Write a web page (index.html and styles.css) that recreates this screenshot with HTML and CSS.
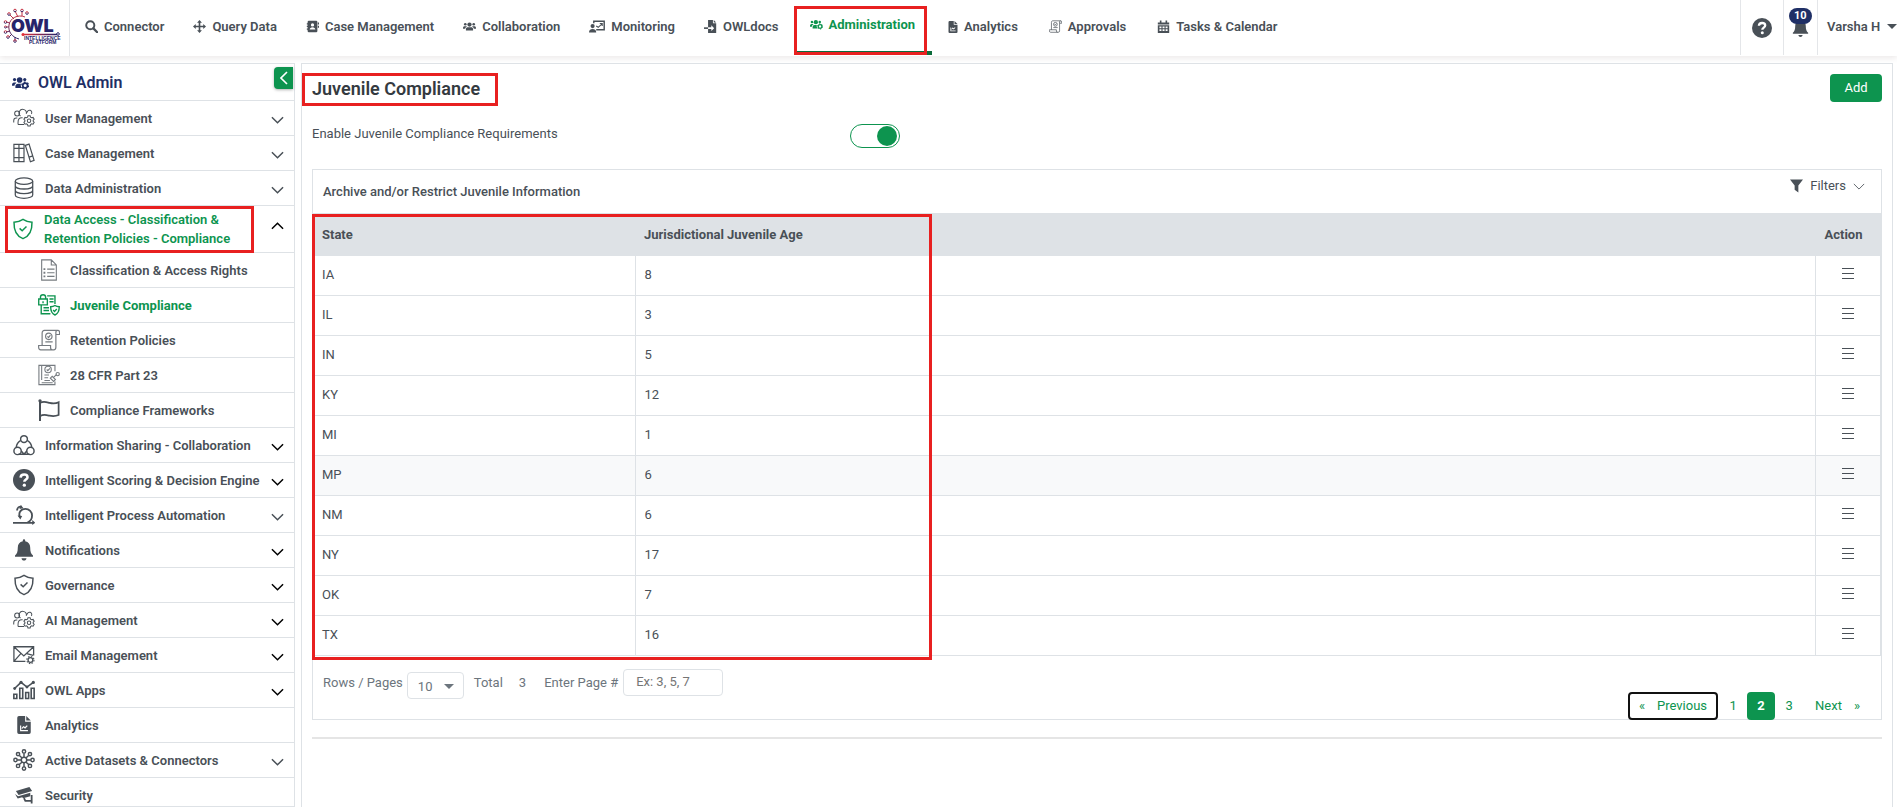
FILE: index.html
```
<!DOCTYPE html>
<html lang="en">

<head>
    <meta charset="UTF-8">
    <meta name="viewport" content="width=device-width, initial-scale=1.0">
    <title>Juvenile Compliance</title>
    <link rel="stylesheet" href="styles.css">
</head>

<body>
    <svg class="sprite" aria-hidden="true">
        <symbol id="i-search" viewBox="0 0 16 16"><circle cx="6.5" cy="6.5" r="5" fill="none" stroke="currentColor" stroke-width="2.4"/><path d="M10.3 10.3L15 15" stroke="currentColor" stroke-width="2.8" stroke-linecap="round"/></symbol>
        <symbol id="i-move" viewBox="0 0 16 16"><path d="M8 0l3 3.4H9V7h3.600V5L16 8l-3.400 3V9H9v3.600h2L8 16l-3-3.400h2V9H3.400v2L0 8l3.400-3v2H7V3.400H5z" fill="currentColor"/></symbol>
        <symbol id="i-book" viewBox="0 0 16 16"><path fill-rule="evenodd" d="M3.500 1h9A1.500 1.500 0 0 1 14 2.500v11a1.500 1.500 0 0 1-1.500 1.500h-9A1.500 1.500 0 0 1 2 13.500V12H1v-1.500h1v-2H1V7h1V5.500H1V4h1V2.500A1.500 1.500 0 0 1 3.500 1zM8 4a2 2 0 1 0 0 4 2 2 0 0 0 0-4zM4.500 11.800h7C11.500 10 10 8.800 8 8.800s-3.500 1.200-3.500 3z" fill="currentColor"/><path d="M14.500 3H16v2.500h-1.500zM14.500 7H16v2.500h-1.500z" fill="currentColor"/></symbol>
        <symbol id="i-users" viewBox="0 0 20 16"><g fill="currentColor"><circle cx="10" cy="5" r="3.300"/><circle cx="3.500" cy="4.500" r="2"/><circle cx="16.500" cy="4.500" r="2"/><path d="M4.500 14v-2c0-2 1.500-3 3-3h5c1.500 0 3 1 3 3v2zM0 10.500C0 8.500 1 7.500 2.500 7.500h2.800l.7.8c-1.500.6-2.400 1.600-2.600 3.200H0zM20 10.500c0-2-1-3-2.500-3h-2.800l-.7.8c1.500.6 2.400 1.600 2.600 3.200H20z"/></g></symbol>
        <symbol id="i-usergear" viewBox="0 0 20 16"><g fill="currentColor"><circle cx="9" cy="4.500" r="3.300"/><circle cx="3" cy="4" r="1.900"/><circle cx="15" cy="4" r="1.900"/><path d="M4 14v-2c0-2 1.300-3.200 3-3.200h3.500c-.6 2 .1 4 1.500 5.200zM0 10.500C0 8.500 1 7.300 2.300 7.300h2.400l.6.8c-1.400.6-2.200 1.600-2.400 3.200H0z"/></g><circle cx="15.500" cy="11" r="2.800" fill="none" stroke="currentColor" stroke-width="2"/><circle cx="15.500" cy="11" r="4" fill="none" stroke="currentColor" stroke-width="1.500" stroke-dasharray="2 2.190"/></symbol>
        <symbol id="i-board" viewBox="0 0 20 16"><path d="M6 4V1.500h13v10.500H9" fill="none" stroke="currentColor" stroke-width="1.800"/><path d="M9 7.500l2.500 1.500 4.500-4M13.500 4.300h3v3" fill="none" stroke="currentColor" stroke-width="1.400"/><circle cx="4.500" cy="7.500" r="2.600" fill="currentColor"/><path d="M0 15.500c0-3 1.500-4.500 4.500-4.500S9 12.500 9 15.500z" fill="currentColor"/></symbol>
        <symbol id="i-import" viewBox="0 0 16 16"><path fill-rule="evenodd" d="M5 0h6v4h4v12H5v-5h4v2.500L12.500 10 9 6.500V9H5zM12 0l3 3h-3z" fill="currentColor"/><path d="M0 9h5v2H0z" fill="currentColor"/></symbol>
        <symbol id="i-filechart" viewBox="0 0 12 16"><path fill-rule="evenodd" d="M1.500 0H7v5h5v9.500a1.500 1.500 0 0 1-1.500 1.500h-9A1.500 1.500 0 0 1 0 14.500v-13A1.500 1.500 0 0 1 1.500 0zM2.500 8.500v5h7v-1h-6v-4zM4 11.800l1.600-1.500 1.400 1 2.300-2.400-.8-.7-1.600 1.600-1.400-1L4 10.400z" fill="currentColor"/><path d="M8 0l4 4H8z" fill="currentColor"/></symbol>
        <symbol id="i-scroll" viewBox="0 0 24 24"><g fill="none" stroke="currentColor" stroke-width="1.300"><path d="M4.500 18V4.500C4.500 2.500 5.500 1.500 7 1.500h14.500c1.300 0 2 .8 2 2V6h-4M19.500 6V3.500c0-1.200.8-2 2-2M19.500 6v14c0 1.700-.8 2.700-2.300 2.700H3C1.500 22.700.7 21.500.7 20v-2h13v2.200c0 1.500.8 2.500 2 2.500"/><circle cx="11.800" cy="8" r="3.500"/><path d="M10.300 8l1.200 1.300 2-2.500M8 14h8"/></g></symbol>
        <symbol id="i-calendar" viewBox="0 0 16 16"><path fill-rule="evenodd" d="M1 3h2.500V.500h2V3h5V.500h2V3H15v2.500H1zM1 6.500h14V16H1zM3 8v2h2.500V8zM6.800 8v2h2.500V8zM10.600 8v2H13V8zM3 11.500v2h2.500v-2zM6.800 11.500v2h2.500v-2zM10.600 11.500v2H13v-2z" fill="currentColor"/></symbol>
        <symbol id="i-question" viewBox="0 0 20 20"><circle cx="10" cy="10" r="10" fill="currentColor"/><path d="M6.900 7.800C7 5.900 8.300 5 10.100 5c1.800 0 3.100 1 3.100 2.500 0 2-2.900 2.200-2.900 4.200" fill="none" stroke="#fff" stroke-width="2.300"/><circle cx="10.300" cy="14.700" r="1.500" fill="#fff"/></symbol>
        <symbol id="i-bell" viewBox="0 0 20 22"><path d="M8.800 1.500a1.200 1.200 0 0 1 2.400 0v.8c3.300.6 5 3 5 6.200 0 4.500 1 6.500 2.800 8v1.200H1v-1.200c1.800-1.500 2.800-3.500 2.800-8 0-3.200 1.700-5.600 5-6.200zM7.500 19.200h5c-.2 1.500-1.200 2.300-2.500 2.300s-2.300-.8-2.500-2.300z" fill="currentColor"/></symbol>
        <symbol id="i-chevron" viewBox="0 0 14 8"><path d="M1 1l6 6 6-6" fill="none" stroke="currentColor" stroke-width="1.600"/></symbol>
        <symbol id="i-chevron-thin" viewBox="0 0 14 8"><path d="M1 1l6 6 6-6" fill="none" stroke="currentColor" stroke-width="1"/></symbol>
        <symbol id="i-team" viewBox="0 0 24 20"><g fill="none" stroke="currentColor" stroke-width="1.100"><circle cx="4.500" cy="5" r="2.700"/><path d="M.8 15v-2c0-2 1-3 2.700-3h1.200M14.500 5.500A4 4 0 1 0 8.200 7.800M5.500 17v-2.500c0-3 1.500-4.700 4-4.700h1M5.500 17H12M15.500 4a2.500 2.500 0 1 1 4.500 1.500"/><circle cx="17.500" cy="13" r="1.900"/><path d="M16.300 7.600h2.400l.4 1.500 1.300.7 1.500-.4 1.200 2-1.100 1.100v1.200l1.100 1.100-1.200 2-1.500-.4-1.300.7-.4 1.500h-2.400l-.4-1.500-1.300-.7-1.500.4-1.200-2 1.100-1.100v-1.200l-1.100-1.100 1.200-2 1.500.4 1.300-.7z"/></g></symbol>
        <symbol id="i-binders" viewBox="0 0 24 22"><g fill="none" stroke="currentColor" stroke-width="1.300"><path d="M1 1.500h5.500v19H1zM6.500 1.500H12v19H6.500zM1 6h11M1 16h11M13.500 2.700l4-1.400L23 19l-4 1.500zM17.600 15.500l4.100-1.400"/></g></symbol>
        <symbol id="i-database" viewBox="0 0 22 24"><g fill="none" stroke="currentColor" stroke-width="1.400"><ellipse cx="11" cy="4.500" rx="9.500" ry="3.500"/><path d="M1.500 4.500v15c0 2 4 3.700 9.500 3.700s9.500-1.700 9.500-3.700v-15M1.500 9.500c0 2 4 3.600 9.500 3.600s9.500-1.600 9.500-3.600M1.500 14.500c0 2 4 3.600 9.500 3.600s9.500-1.600 9.500-3.600"/></g></symbol>
        <symbol id="i-shield" viewBox="0 0 22 24"><g fill="none" stroke="currentColor" stroke-width="1.600"><path d="M11 1.500c3 2 6 3 9.800 3.200.3 9-2 15-9.800 17.800C3.200 19.700.9 13.700 1.200 4.700 5 4.500 8 3.500 11 1.500z"/><path d="M7.300 11.300l2.800 2.700 4.700-4.800"/></g></symbol>
        <symbol id="i-list" viewBox="0 0 18 24"><g fill="none" stroke="currentColor" stroke-width="1.200"><path d="M1 1h10.500L17 6.500V23H1zM11.500 1v5.500H17M7 11h8M7 15h8M7 19h8"/><path d="M3 11h2M3 15h2M3 19h2" stroke-width="2"/></g></symbol>
        <symbol id="i-lockdoc" viewBox="0 0 24 24"><g fill="none" stroke="currentColor" stroke-width="1.500"><path d="M.8 5.500h9.400v6.300H.8zM2.700 5.500V3.300c0-3.300 5.600-3.300 5.600 0v2.200M5.500 8v2M10 2h8.500v9M3.500 12v9.500h10M12.500 5.500H17M12.500 8.500H17M6 15h6M6 18h6M18.500 12.500c1.500 1 3 1.300 4.700 1.400 0 4.500-1 7.500-4.700 9-3.700-1.500-4.700-4.500-4.700-9 1.700-.1 3.200-.4 4.700-1.400z"/><path d="M16.500 17.500l1.500 1.500 2.500-2.700"/></g></symbol>
        <symbol id="i-signdoc" viewBox="0 0 24 24"><g fill="none" stroke="currentColor" stroke-width="1.200"><path d="M18.500 8V1.500H1v21h17.500V19M4 1.500v16M7 12h5M7 15h4M7 18h6M4 20.500h12"/><circle cx="11" cy="6" r="3.500"/><path d="M9.500 6l1.200 1.200L13 4.700M13.500 15.500l2-2 3.500 3.500-2 2zM17 14.500l3-3"/><circle cx="21.500" cy="11" r="1.800"/></g></symbol>
        <symbol id="i-flag" viewBox="0 0 24 24"><path d="M2.500 4c4-1.700 7-.5 10 .2 3.500.8 7 .8 10-.7v14c-3.500 1.500-6.500 1.500-10 .7-3.500-.8-6.500-1.700-10 .3" fill="none" stroke="currentColor" stroke-width="1.900"/><path d="M2.200 2v22" stroke="currentColor" stroke-width="2.200"/><circle cx="2.200" cy="2" r="1.800" fill="currentColor"/></symbol>
        <symbol id="i-sharing" viewBox="0 0 24 24"><g fill="none" stroke="currentColor" stroke-width="1.600"><circle cx="12" cy="5.500" r="3.700"/><circle cx="5" cy="18.500" r="4"/><circle cx="19" cy="18.500" r="4"/><path d="M8.500 7C6 8.500 3.800 11.500 3.500 14.800M15.500 7c2.500 1.500 4.700 4.500 5 7.800M9 18.500l3 3.500 3-3.500M12 22H6M12 22h6"/></g></symbol>
        <symbol id="i-process" viewBox="0 0 24 22"><g fill="none" stroke="currentColor" stroke-width="2"><path d="M0 19.500h22M7.500 13C5.500 8 9 4.300 13.500 4.300c4.200 0 7.300 3.200 7.300 7.300 0 3.500-2 6.500-5.300 7.900M4.500 6C4.500 3 6.500 1.500 9.500 2"/></g><path d="M8.500 0l3 3.500-4.500 1zM21 16.500l3.500 3-3.500 2.500zM5 11.500l5 .5-2 4z" fill="currentColor"/></symbol>
        <symbol id="i-mail" viewBox="0 0 24 20"><g fill="none" stroke="currentColor" stroke-width="1.400"><path d="M13.500 17H1V1h21.500v9.500M1 1l10.800 10L22.500 1M1 17l7.500-8.500M22 10.500L15 8.500"/><circle cx="19" cy="15.500" r="2.600"/></g><circle cx="19" cy="15.500" r="3.900" fill="none" stroke="currentColor" stroke-width="1.200" stroke-dasharray="1.600 1.460"/></symbol>
        <symbol id="i-bars" viewBox="0 0 26 22"><g fill="none" stroke="currentColor" stroke-width="1.900"><path d="M1 16h3.500v5H1zM8 9h3.500v12H8zM15 14h3.500v7H15zM21.500 9H25v12h-3.500zM1.500 9.500L9.500 2l7 5.500L24 2"/></g><g fill="currentColor"><circle cx="2" cy="9.300" r="1.700"/><circle cx="9.500" cy="2" r="1.900"/><circle cx="16.500" cy="7.500" r="1.700"/><circle cx="24" cy="2" r="1.900"/></g></symbol>
        <symbol id="i-network" viewBox="0 0 24 24"><g fill="none" stroke="currentColor" stroke-width="1.600"><circle cx="12" cy="12" r="3"/><path d="M12 9V4.500M12 15v4.500M9 12H4.500M15 12h4.500M9.900 9.900L7 7M14.100 9.900L17 7M9.900 14.100L7 17M14.100 14.100L17 17"/><circle cx="12" cy="2.700" r="1.800"/><circle cx="12" cy="21.300" r="1.800"/><circle cx="2.700" cy="12" r="1.800"/><circle cx="21.300" cy="12" r="1.800"/><circle cx="5.500" cy="5.500" r="1.800"/><circle cx="18.500" cy="5.500" r="1.800"/><circle cx="5.500" cy="18.500" r="1.800"/><circle cx="18.500" cy="18.500" r="1.800"/></g></symbol>
        <symbol id="i-camera" viewBox="0 0 22 20"><g fill="currentColor"><path d="M2 5.500L17 1l3 4.500L5 10zM1 9l3.500 2.500L18 7.500v4l-8 2-1-1-5 1.500z"/></g><path d="M11 13.500l1.500 3H19M19.500 10v9.500" fill="none" stroke="currentColor" stroke-width="2"/></symbol>
        <symbol id="i-filter" viewBox="0 0 14 14"><path d="M0 0h14L9 6.500V14l-4-3V6.500z" fill="currentColor"/></symbol>
        <symbol id="i-menu" viewBox="0 0 12 12"><path d="M0 1.500h12M0 6.500h12M0 11.500h12" stroke="currentColor" stroke-width="1"/></symbol>
    </svg>

    <header class="topbar">
        <a class="logo" href="#" aria-label="OWL Intelligence Platform">
            <svg width="66" height="40" viewBox="0 0 66 40">
                <defs>
                    <linearGradient id="rim" x1="0" y1="0" x2="0" y2="1"><stop offset="0" stop-color="#d8343f"/><stop offset="1" stop-color="#27246a"/></linearGradient>
                    <linearGradient id="line" gradientUnits="userSpaceOnUse" x1="23" y1="0" x2="57" y2="0"><stop offset="0" stop-color="#e0303a"/><stop offset="1" stop-color="#27246a"/></linearGradient>
                </defs>
                <g fill="none" stroke="url(#rim)" stroke-width="1">
                    <path d="M25 9C18 6 10 10 9 17M9 17C8 24 12 29 19 31M14 11l-4-4M18 9l-3-6M22 8V3M10 15l-4-1M9 19H6M10 23l-4 1M12 26l-3 3M15 29v4"/>
                    <circle cx="9" cy="6" r="1.300"/><circle cx="15" cy="2.500" r="1.300"/><circle cx="22" cy="2.500" r="1.300"/><circle cx="27" cy="5" r="1.300"/><circle cx="5.500" cy="14" r="1.300"/><circle cx="5.500" cy="19" r="1"/><circle cx="5.500" cy="24" r="1.300"/><circle cx="8" cy="29" r="1.300"/><circle cx="15" cy="33" r="1.300"/>
                </g>
                <text class="logo-name" x="11" y="24">OWL</text>
                <path d="M23 26.500h34" stroke="url(#line)" stroke-width="1.300"/>
                <circle cx="23" cy="26.500" r="1.500" fill="#e0303a"/><circle cx="58" cy="26" r="1.300" fill="none" stroke="#27246a"/>
                <text class="logo-tag" x="24" y="32">INTELLIGENCE</text>
                <text class="logo-tag" x="29" y="36">PLATFORM</text>
            </svg>
        </a>
        <nav class="topnav">
            <a href="#"><svg class="ico-13"><use href="#i-search"/></svg>Connector</a>
            <a href="#"><svg class="ico-13"><use href="#i-move"/></svg>Query Data</a>
            <a href="#"><svg class="ico-13"><use href="#i-book"/></svg>Case Management</a>
            <a href="#"><svg class="ico-13"><use href="#i-users"/></svg>Collaboration</a>
            <a href="#"><svg class="ico-16"><use href="#i-board"/></svg>Monitoring</a>
            <a href="#"><svg class="ico-13"><use href="#i-import"/></svg>OWLdocs</a>
            <a class="active" href="#"><svg class="ico-13"><use href="#i-usergear"/></svg>Administration<span class="mark mark-nav"></span></a>
            <a href="#"><svg class="ico-10"><use href="#i-filechart"/></svg>Analytics</a>
            <a href="#"><svg class="ico-13"><use href="#i-scroll"/></svg>Approvals</a>
            <a href="#"><svg class="ico-13"><use href="#i-calendar"/></svg>Tasks &amp; Calendar</a>
        </nav>
        <div class="tools">
            <button class="tool help" type="button" aria-label="Help"><svg><use href="#i-question"/></svg></button>
            <button class="tool alerts" type="button" aria-label="Notifications"><svg><use href="#i-bell"/></svg><span class="badge">10</span></button>
            <button class="tool user" type="button">Varsha H<span class="caret"></span></button>
        </div>
    </header>

    <div class="content">
        <aside class="sidebar">
            <div class="side-head">
                <svg><use href="#i-usergear"/></svg>
                OWL Admin
                <button class="collapse" type="button" aria-label="Collapse menu"><svg><use href="#i-chevron"/></svg></button>
            </div>
            <button class="side-item" type="button"><svg class="icon"><use href="#i-team"/></svg><span>User Management</span><svg class="arrow"><use href="#i-chevron"/></svg></button>
            <button class="side-item" type="button"><svg class="icon"><use href="#i-binders"/></svg><span>Case Management</span><svg class="arrow"><use href="#i-chevron"/></svg></button>
            <button class="side-item" type="button"><svg class="icon"><use href="#i-database"/></svg><span>Data Administration</span><svg class="arrow"><use href="#i-chevron"/></svg></button>
            <button class="side-item open" type="button"><svg class="icon"><use href="#i-shield"/></svg><span>Data Access - Classification &amp; Retention Policies - Compliance</span><svg class="arrow dark up"><use href="#i-chevron"/></svg><span class="mark mark-side"></span></button>
            <a class="side-item sub" href="#"><svg class="icon light"><use href="#i-list"/></svg><span>Classification &amp; Access Rights</span></a>
            <a class="side-item sub active" href="#"><svg class="icon"><use href="#i-lockdoc"/></svg><span>Juvenile Compliance</span></a>
            <a class="side-item sub" href="#"><svg class="icon light"><use href="#i-scroll"/></svg><span>Retention Policies</span></a>
            <a class="side-item sub" href="#"><svg class="icon light"><use href="#i-signdoc"/></svg><span>28 CFR Part 23</span></a>
            <a class="side-item sub" href="#"><svg class="icon"><use href="#i-flag"/></svg><span>Compliance Frameworks</span></a>
            <button class="side-item" type="button"><svg class="icon"><use href="#i-sharing"/></svg><span>Information Sharing - Collaboration</span><svg class="arrow dark"><use href="#i-chevron"/></svg></button>
            <button class="side-item" type="button"><svg class="icon"><use href="#i-question"/></svg><span>Intelligent Scoring &amp; Decision Engine</span><svg class="arrow dark"><use href="#i-chevron"/></svg></button>
            <button class="side-item" type="button"><svg class="icon"><use href="#i-process"/></svg><span>Intelligent Process Automation</span><svg class="arrow"><use href="#i-chevron"/></svg></button>
            <button class="side-item" type="button"><svg class="icon"><use href="#i-bell"/></svg><span>Notifications</span><svg class="arrow dark"><use href="#i-chevron"/></svg></button>
            <button class="side-item" type="button"><svg class="icon"><use href="#i-shield"/></svg><span>Governance</span><svg class="arrow dark"><use href="#i-chevron"/></svg></button>
            <button class="side-item" type="button"><svg class="icon"><use href="#i-team"/></svg><span>AI Management</span><svg class="arrow dark"><use href="#i-chevron"/></svg></button>
            <button class="side-item" type="button"><svg class="icon"><use href="#i-mail"/></svg><span>Email Management</span><svg class="arrow dark"><use href="#i-chevron"/></svg></button>
            <button class="side-item" type="button"><svg class="icon"><use href="#i-bars"/></svg><span>OWL Apps</span><svg class="arrow dark"><use href="#i-chevron"/></svg></button>
            <a class="side-item" href="#"><svg class="icon small"><use href="#i-filechart"/></svg><span>Analytics</span></a>
            <button class="side-item" type="button"><svg class="icon"><use href="#i-network"/></svg><span>Active Datasets &amp; Connectors</span><svg class="arrow"><use href="#i-chevron"/></svg></button>
            <a class="side-item" href="#"><svg class="icon small"><use href="#i-camera"/></svg><span>Security</span></a>
        </aside>

        <main class="panel">
            <div class="page-head">
                <h1>Juvenile Compliance<span class="mark mark-title"></span></h1>
                <button class="btn-add" type="button">Add</button>
            </div>
            <div class="setting">
                <label for="enable">Enable Juvenile Compliance Requirements</label>
                <input class="switch" type="checkbox" id="enable" checked>
            </div>

            <section class="card">
                <div class="card-head">
                    <h2>Archive and/or Restrict Juvenile Information</h2>
                    <button class="filters" type="button"><svg class="funnel"><use href="#i-filter"/></svg>Filters<svg class="down"><use href="#i-chevron-thin"/></svg></button>
                </div>
                <div class="table-wrap">
                    <table>
                        <thead>
                            <tr><th class="col-state">State</th><th>Jurisdictional Juvenile Age</th><th class="col-action">Action</th></tr>
                        </thead>
                        <tbody>
                            <tr><td>IA</td><td>8</td><td><button type="button" aria-label="Actions"><svg><use href="#i-menu"/></svg></button></td></tr>
                            <tr><td>IL</td><td>3</td><td><button type="button" aria-label="Actions"><svg><use href="#i-menu"/></svg></button></td></tr>
                            <tr><td>IN</td><td>5</td><td><button type="button" aria-label="Actions"><svg><use href="#i-menu"/></svg></button></td></tr>
                            <tr><td>KY</td><td>12</td><td><button type="button" aria-label="Actions"><svg><use href="#i-menu"/></svg></button></td></tr>
                            <tr><td>MI</td><td>1</td><td><button type="button" aria-label="Actions"><svg><use href="#i-menu"/></svg></button></td></tr>
                            <tr class="hovered"><td>MP</td><td>6</td><td><button type="button" aria-label="Actions"><svg><use href="#i-menu"/></svg></button></td></tr>
                            <tr><td>NM</td><td>6</td><td><button type="button" aria-label="Actions"><svg><use href="#i-menu"/></svg></button></td></tr>
                            <tr><td>NY</td><td>17</td><td><button type="button" aria-label="Actions"><svg><use href="#i-menu"/></svg></button></td></tr>
                            <tr><td>OK</td><td>7</td><td><button type="button" aria-label="Actions"><svg><use href="#i-menu"/></svg></button></td></tr>
                            <tr><td>TX</td><td>16</td><td><button type="button" aria-label="Actions"><svg><use href="#i-menu"/></svg></button></td></tr>
                        </tbody>
                    </table>
                    <span class="mark mark-table"></span>
                </div>
                <div class="card-foot">
                    <div class="paging-tools">
                        <label for="rows">Rows / Pages</label>
                        <span class="select"><select id="rows"><option>10</option><option>25</option></select></span>
                        <span>Total</span>
                        <span class="count">3</span>
                        <label for="page">Enter Page #</label>
                        <input type="text" id="page" placeholder="Ex: 3, 5, 7">
                    </div>
                    <nav class="pagination">
                        <a class="prev" href="#"><span>«</span>Previous</a>
                        <a href="#">1</a>
                        <a class="current" href="#">2</a>
                        <a href="#">3</a>
                        <a class="next" href="#">Next<span>»</span></a>
                    </nav>
                </div>
            </section>
            <hr>
        </main>
    </div>
</body>

</html>
```
FILE: styles.css
```
* {
    box-sizing: border-box;
}

body {
    margin: 0;
    height: 100vh;
    display: flex;
    flex-direction: column;
    overflow: hidden;
    font-family: Roboto, "Liberation Sans", sans-serif;
    font-size: 13px;
    line-height: 20px;
    color: #495057;
    background: #fff;
}

a {
    color: inherit;
    text-decoration: none;
}

button {
    font: inherit;
    color: inherit;
    background: none;
    border: 0;
    padding: 0;
    cursor: pointer;
}

svg {
    display: block;
    flex: none;
}

.sprite {
    position: absolute;
    width: 0;
    height: 0;
}

/* red highlight frames */
.mark {
    position: absolute;
    border: 3px solid #e82020;
    pointer-events: none;
}

/* top bar */
.topbar {
    display: flex;
    height: 56px;
    flex: none;
    box-shadow: 0 2px 6px rgba(60, 30, 30, 0.1);
}

.logo {
    width: 70px;
    border-right: 1px solid #e4e6e9;
    padding-top: 8px;
}

.logo-name {
    font: 900 18px Inter, sans-serif;
    fill: #27246a;
}

.logo-tag {
    font: 700 5px "Liberation Sans", sans-serif;
    fill: #27246a;
}

.topnav {
    display: flex;
    flex: 1;
    padding: 0 15px 0 1px;
}

.topnav a {
    position: relative;
    display: flex;
    align-items: center;
    gap: 6px;
    padding: 0 15px 3px 14px;
    font-weight: 600;
    white-space: nowrap;
}

.topnav .active {
    height: 55px;
    padding: 0 17px 2px 16px;
    border-bottom: 4px solid #0b6b3a;
    color: #0d944f;
    font-weight: 700;
}

.topnav .active ~ a {
    padding: 0 15px 3px 16px;
}

.mark-nav {
    top: 6px;
    left: 0;
    right: 5px;
    bottom: -4px;
}

.ico-10 {
    width: 10px;
    height: 12px;
}

.ico-13 {
    width: 13px;
    height: 13px;
}

.ico-16 {
    width: 16px;
    height: 13px;
}

.tools {
    display: flex;
}

.tool {
    position: relative;
    height: 55px;
    border-left: 1px solid #e4e6e9;
    display: flex;
    align-items: center;
}

.help {
    width: 43px;
    padding-left: 11px;
}

.help svg {
    width: 20px;
    height: 20px;
}

.alerts {
    width: 34px;
    padding-left: 8px;
}

.alerts svg {
    width: 17px;
    height: 20px;
}

.badge {
    position: absolute;
    top: 8px;
    left: 5px;
    padding: 0 5px;
    border-radius: 8px;
    background: #1f2f66;
    color: #fff;
    font-size: 11px;
    font-weight: 700;
    line-height: 16px;
}

.user {
    padding: 0 0 2px 9px;
    width: 80px;
    font-weight: 600;
    justify-content: space-between;
}

.caret,
.select::after {
    border: 5px solid transparent;
    border-top-color: currentColor;
    border-bottom: 0;
}

/* columns under the bar */
.content {
    display: flex;
    flex: 1;
    min-height: 0;
    padding: 7px 4px 0 0;
    gap: 6px;
}

.sidebar {
    width: 295px;
    flex: none;
    border: 1px solid #dee2e6;
    border-left: 0;
}

.side-head {
    position: relative;
    display: flex;
    align-items: center;
    gap: 9px;
    height: 37px;
    padding: 2px 0 0 12px;
    border-bottom: 1px solid #dee2e6;
    font-size: 16px;
    font-weight: 600;
    color: #1f2f66;
}

.side-head svg {
    width: 17px;
    height: 14px;
}

.collapse {
    position: absolute;
    top: 3px;
    right: 1px;
    width: 19px;
    height: 22px;
    display: flex;
    align-items: center;
    justify-content: center;
    border-radius: 4px 0 0 4px;
    background: #0d944f;
    color: #fff;
    box-shadow: 0 1px 3px rgba(0, 0, 0, 0.3);
}

.collapse svg {
    width: 14px;
    height: 8px;
    transform: rotate(90deg);
}

.side-item {
    position: relative;
    display: flex;
    align-items: center;
    gap: 10px;
    width: 100%;
    height: 35px;
    padding: 0 10px 0 13px;
    border-bottom: 1px solid #dee2e6;
    font-weight: 600;
    line-height: 19px;
    text-align: left;
    white-space: nowrap;
}

.side-item .icon {
    width: 22px;
    height: 22px;
}

.side-item .small {
    height: 18px;
}

.side-item .light {
    opacity: 0.75;
}

.side-item .arrow {
    width: 13px;
    height: 8px;
    margin-left: auto;
    margin-top: 4px;
}

.side-item .dark {
    color: #000;
}

.side-item .up {
    transform: rotate(180deg);
    margin-top: -6px;
}

.side-item.open {
    height: 47px;
    padding-left: 12px;
    white-space: normal;
    color: #0d944f;
}

.side-item.sub {
    padding-left: 38px;
}

.side-item.active {
    color: #0d944f;
    font-weight: 700;
}

.mark-side {
    top: 0;
    bottom: -1px;
    left: 5px;
    width: 249px;
}

/* main panel */
.panel {
    flex: 1;
    min-width: 0;
    padding: 10px;
    border: 1px solid #dee2e6;
    border-bottom: 0;
}

.page-head {
    display: flex;
    justify-content: space-between;
    align-items: center;
}

h1 {
    position: relative;
    margin: 2px 0 0;
    font-size: 18px;
    font-weight: 600;
    color: #343a40;
}

.mark-title {
    top: -6px;
    left: -10px;
    right: -18px;
    bottom: -7px;
}

.btn-add {
    width: 52px;
    height: 28px;
    border-radius: 4px;
    background: #0d944f;
    color: #fff;
}

.setting {
    display: grid;
    grid-template-columns: 538px 1fr;
    margin: 22px 0 21px;
}

.switch {
    appearance: none;
    width: 50px;
    height: 24px;
    margin: 0;
    padding: 1px 2px;
    border: 1px solid #0d944f;
    border-radius: 12px;
}

.switch::before {
    content: "";
    display: block;
    width: 20px;
    height: 20px;
    margin-left: auto;
    border-radius: 50%;
    background: #0d944f;
}

.card {
    border: 1px solid #dee2e6;
}

.card-head {
    display: flex;
    justify-content: space-between;
    height: 43px;
    padding: 6px 16px 0 10px;
}

h2 {
    margin: 6px 0;
    font-size: 13px;
    font-weight: 500;
    line-height: 20px;
}

.filters {
    display: flex;
    align-items: center;
    gap: 7px;
    height: 20px;
}

.funnel {
    width: 13px;
    height: 14px;
}

.down {
    width: 12px;
    height: 7px;
}

.table-wrap {
    position: relative;
}

table {
    width: 100%;
    border-collapse: collapse;
}

th {
    height: 42px;
    padding: 2px 9px 0;
    background: #dee2e6;
    text-align: left;
    font-weight: 700;
}

td {
    height: 40px;
    padding: 0 9px;
    border: 1px solid #dee2e6;
    border-left: 0;
}

td:nth-child(2) {
    border-right: 0;
}

td:last-child {
    padding-bottom: 4px;
    border-left: 1px solid #dee2e6;
}

.col-state {
    width: 322px;
}

.col-action {
    width: 65px;
}

td button {
    display: block;
    margin: 0 auto;
}

td svg {
    width: 12px;
    height: 12px;
}

.hovered {
    background: #f8f9fa;
}

.mark-table {
    top: 1px;
    bottom: -4px;
    left: -1px;
    width: 620px;
}

.card-foot {
    display: flex;
    justify-content: space-between;
    height: 63px;
    padding: 13px 15px 0 10px;
    color: #6c757d;
}

.paging-tools {
    display: flex;
    align-items: flex-start;
    line-height: 28px;
}

.select {
    position: relative;
    margin: 3px 10px 0 4px;
}

.select::after {
    content: "";
    position: absolute;
    top: 12px;
    right: 10px;
    pointer-events: none;
}

select,
input[type="text"] {
    appearance: none;
    display: block;
    height: 27px;
    border: 1px solid #dee2e6;
    border-radius: 4px;
    background: #fff;
    color: inherit;
    font: inherit;
}

select {
    width: 57px;
    padding: 0 10px;
}

input[type="text"] {
    width: 100px;
    margin-left: 5px;
    padding: 0 12px;
}

.count {
    margin: 0 18px 0 16px;
}

.pagination {
    display: flex;
    align-self: flex-end;
    color: #0d944f;
    line-height: 28px;
    margin-bottom: -1px;
}

.pagination a {
    width: 28px;
    height: 28px;
    text-align: center;
}

.pagination .prev {
    display: flex;
    gap: 12px;
    width: auto;
    padding: 0 9px;
    border: 2px solid #111;
    border-radius: 4px;
    line-height: 24px;
    margin-right: 1px;
}

.pagination .current {
    border-radius: 4px;
    background: #0d944f;
    color: #fff;
    font-weight: 700;
}

.pagination .next {
    display: flex;
    gap: 12px;
    width: auto;
    padding: 0 6px 0 12px;
}

hr {
    height: 2px;
    margin: 17px 0 0;
    border: 0;
    background: #e5e5e5;
}
```
